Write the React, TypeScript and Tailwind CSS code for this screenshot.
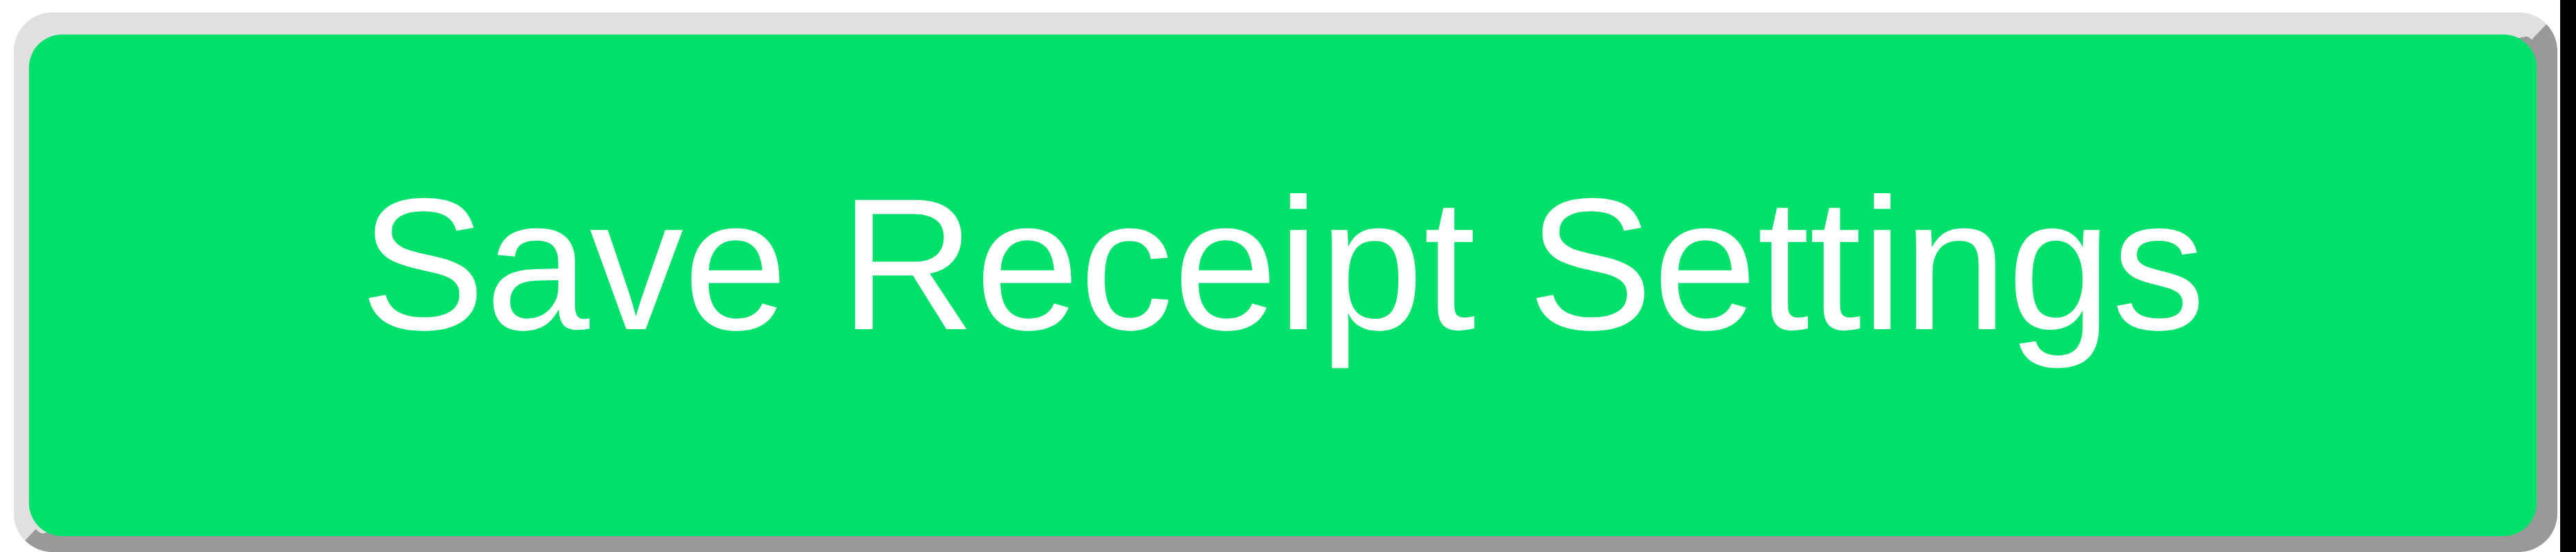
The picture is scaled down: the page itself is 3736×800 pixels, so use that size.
function SaveButton() {
  return (
    <button
      type="button"
      className="ml-[20px] mt-[18px] h-[782px] w-[3689px] shrink-0 rounded-[56px] border-t-[32px] border-l-[22px] border-r-[30px] border-b-[23px] border-t-[#e0e0e0] border-l-[#e0e0e0] border-r-[#999999] border-b-[#999999] bg-[linear-gradient(to_bottom_right,#e0e0e0_50%,#999999_50%)] p-0"
    >
      <div className="flex h-full w-full justify-center rounded-[48px] bg-[#00e06a] pt-[197px]">
        <span className="font-['Liberation_Sans',Arial,sans-serif] text-[272px] leading-none text-white">
          Save Receipt Settings
        </span>
      </div>
    </button>
  );
}

export default function App() {
  return (
    <div className="flex h-[800px] w-[3736px] overflow-hidden bg-white">
      <div className="flex flex-1 items-start">
        <SaveButton />
      </div>
      <div className="h-full w-[23px] bg-black" />
    </div>
  );
}
